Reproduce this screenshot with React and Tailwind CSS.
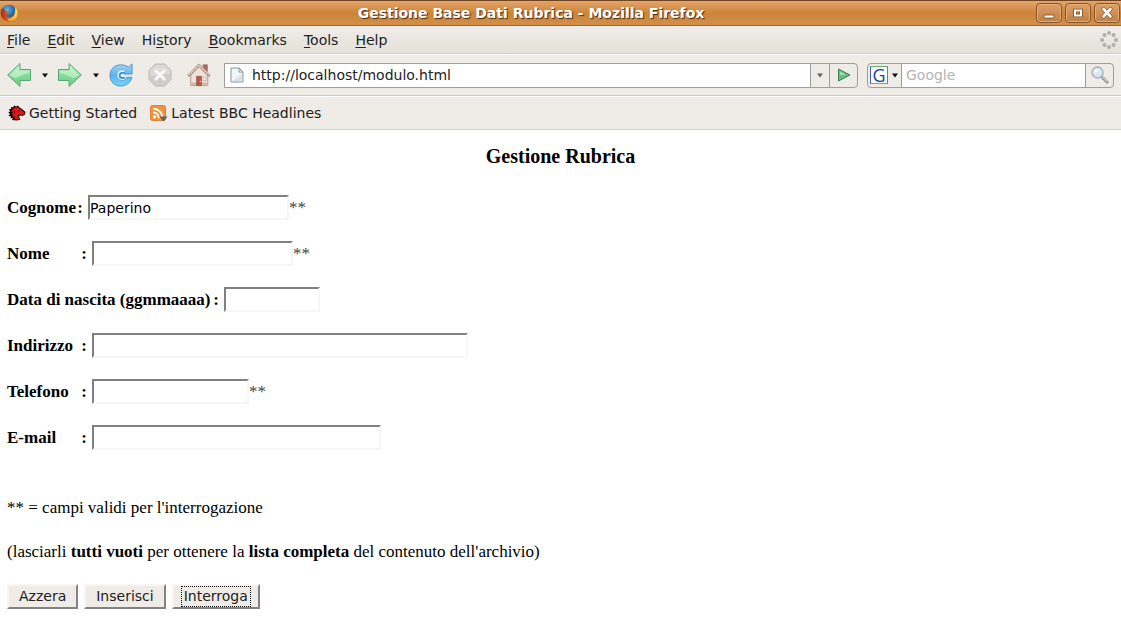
import React, { useState } from "react";

const menus = ["File", "Edit", "View", "History", "Bookmarks", "Tools", "Help"];
// index of the underlined letter in each menu name
const accessKeys = { History: 3 };

const fields = [
  { id: "cognome", label: "Cognome", width: "w-[201px]", starred: true, labelWidth: "w-19" },
  { id: "nome", label: "Nome", width: "w-[201px]", starred: true, labelWidth: "w-20" },
  { id: "nascita", label: "Data di nascita (ggmmaaaa)", width: "w-24", labelWidth: "w-53" },
  { id: "indirizzo", label: "Indirizzo", width: "w-[376px]", labelWidth: "w-20" },
  { id: "telefono", label: "Telefono", width: "w-[157px]", starred: true, labelWidth: "w-20" },
  { id: "email", label: "E-mail", width: "w-[289px]", labelWidth: "w-20" },
];

const FirefoxIcon = () => (
  <svg width="18" height="18" viewBox="0 0 18 18">
    <defs>
      <radialGradient id="globe" cx="0.4" cy="0.3" r="0.8">
        <stop offset="0" stopColor="#6ab4dd" />
        <stop offset="0.5" stopColor="#2566a8" />
        <stop offset="1" stopColor="#17306e" />
      </radialGradient>
      <linearGradient id="tail" x1="0" y1="0" x2="1" y2="0">
        <stop offset="0" stopColor="#a8281a" />
        <stop offset="0.5" stopColor="#ea6a1b" />
        <stop offset="1" stopColor="#ffd83e" />
      </linearGradient>
    </defs>
    <circle cx="9" cy="9" r="8.300" fill="url(#globe)" />
    <path d="M1 5C0 12 4 17.500 9.500 17.500C15 17.500 18 13 17.500 8C17.300 5.500 16 3.500 14.500 2.500C15.500 5 15.200 6 14.800 7.500C15 11 12.500 13.500 9.500 13.300C7.500 13.200 6.300 12 6 10.500C7.500 11 8.800 10.700 10 9.700C8.500 9.800 7.500 9 6.700 8.200C6.200 7.300 5.500 6.500 4.600 6.300C4 5.500 3.600 4.500 3.700 3.600C3 4 2.600 4.600 2.400 5.300Z" fill="url(#tail)" />
    <path d="M16 5C17 11 14 16 8 16" fill="none" stroke="#ffe25b" strokeWidth="1" />
  </svg>
);

const Arrow = ({ flip }) => (
  <svg width="24" height="26" viewBox="0 0 24 26" className={flip ? "-scale-x-100" : ""}>
    <defs>
      <linearGradient id="arrowFill" x1="0" y1="0" x2="0" y2="1">
        <stop offset="0" stopColor="#c2f0c8" />
        <stop offset="0.5" stopColor="#84dc98" />
        <stop offset="1" stopColor="#6ccb82" />
      </linearGradient>
    </defs>
    <path d="M0.700 13L13 1.500V7.500H23.500V18.500H13V24.500Z" fill="url(#arrowFill)" stroke="#58a877" strokeWidth="1" strokeLinejoin="round" />
    <path d="M2.500 13L12 4V8.500H22.500V11C17 11 13 15 8 16Z" fill="#d5f7d8" opacity="0.6" />
  </svg>
);

const Caret = ({ color = "#111" }) => (
  <svg width="8" height="5" viewBox="0 0 8 5">
    <path d="M1 0.500H7L4 4.500Z" fill={color} />
  </svg>
);

const ReloadIcon = () => (
  <svg width="24" height="24" viewBox="0 0 26 26">
    <defs>
      <linearGradient id="reloadFill" x1="0" y1="0" x2="0" y2="1">
        <stop offset="0" stopColor="#a8d8f4" />
        <stop offset="0.5" stopColor="#58b4ec" />
        <stop offset="1" stopColor="#7bd2f8" />
      </linearGradient>
    </defs>
    <path d="M21 4.500L25 1V12H14L17 8.500C15.500 7.300 13 7 11 8.500C8 10.800 8.300 15.700 11.500 17.700C14.500 19.500 18 18 19 15.500H25C23 21.500 18.500 25 12.500 25C6 25 1 20 1 13.500C1 7 6 2 12.500 2C16 2 19 3 21 4.500Z" fill="url(#reloadFill)" stroke="#4b93c8" strokeWidth="1" strokeLinejoin="round" />
    <path d="M17 8.500C15.500 7.300 13 7 11 8.500C8 10.800 8.300 15.700 11.500 17.700C14.500 19.500 18 18 19 15.500L16 13.500Z" fill="#e8f5fc" />
    <path d="M17.200 11.200C14.500 9.800 11.500 11 11.500 13.500C11.500 16 14.500 17 17.500 15.500" fill="none" stroke="#3f97d6" strokeWidth="2.200" />
  </svg>
);

const StopIcon = () => (
  <svg width="24" height="24" viewBox="0 0 26 26">
    <path d="M8 1H18L25 8V18L18 25H8L1 18V8Z" fill="#cfcdcb" stroke="#bfbdba" />
    <path d="M8.500 2.200H17.500L23.800 8.500V12C17 11 10 14 2.200 14V8.500Z" fill="#dcdad8" />
    <path d="M8.500 8.500L17.500 17.500M17.500 8.500L8.500 17.500" stroke="#f9f8f7" strokeWidth="3.200" strokeLinecap="round" />
  </svg>
);

const HomeIcon = () => (
  <svg width="24" height="24" viewBox="0 0 26 26">
    <path d="M17.500 2H22V9L17.500 6Z" fill="#b5675b" stroke="#a3736a" />
    <path d="M4 12L13 3.500L22.500 12V24.500H4Z" fill="#f0e2d7" stroke="#b39b8c" />
    <path d="M4.500 21H22V24H4.500Z" fill="#cfb9a9" />
    <path d="M1.500 14L13 2.500L24.500 14" fill="none" stroke="#a38b80" strokeWidth="3" strokeLinejoin="round" />
    <path d="M2 13L13 2.500L24 13" fill="none" stroke="#dccdc3" strokeWidth="1.500" />
    <rect x="10.500" y="14.500" width="5" height="10" fill="#b7584a" stroke="#9a6156" />
    <rect x="17.500" y="15" width="3" height="4" fill="#fff" stroke="#b9a497" strokeWidth="0.800" />
    <circle cx="14.500" cy="20" r="0.700" fill="#fff" />
  </svg>
);

const PageIcon = () => (
  <svg width="14" height="16" viewBox="0 0 14 16">
    <path d="M1 1H9L13 5V15H1Z" fill="#f3f6f8" stroke="#8295a1" />
    <path d="M9 1V5H13Z" fill="#fff" stroke="#8295a1" strokeLinejoin="round" />
    <path d="M2.500 14L12 7V14Z" fill="#dbe4ea" />
  </svg>
);

const GoIcon = () => (
  <svg width="14" height="14" viewBox="0 0 14 14">
    <path d="M1.500 1L13 7L1.500 13Z" fill="#67bd82" stroke="#35874f" strokeLinejoin="round" />
    <path d="M3 3.500L9 7H3Z" fill="#a7dfb5" />
  </svg>
);

const SearchIcon = () => (
  <svg width="18" height="18" viewBox="0 0 18 18">
    <path d="M10.500 10.500L16 16" stroke="#8b8b8b" strokeWidth="3" strokeLinecap="round" />
    <path d="M11 10.500L16 15.500" stroke="#cfcfcf" strokeWidth="1.200" strokeLinecap="round" />
    <circle cx="6.500" cy="6.500" r="5.500" fill="#d3e7f4" stroke="#a9afb3" strokeWidth="1.300" />
    <path d="M3 6.500C3 4 5 3 7.500 3.200C8.500 5 5.500 7 3 6.500Z" fill="#fff" />
  </svg>
);

const GoogleMark = () => (
  <span className="flex h-[18px] w-[18px] items-center justify-center border border-t-[#62b06a] border-r-[#d9515a] border-b-[#62b06a] border-l-[#3d62c4] bg-white font-['Open_Sans','DejaVu_Sans',sans-serif] text-[18px] leading-none text-[#20409c]">
    G
  </span>
);

const Throbber = () => (
  <svg width="18" height="18" viewBox="0 0 18 18" fill="#b1afab">
    <circle cx="9" cy="2" r="2" />
    <circle cx="13.500" cy="4" r="2" />
    <circle cx="16" cy="9" r="2" />
    <circle cx="13.500" cy="14" r="2" />
    <circle cx="9" cy="16" r="2" />
    <circle cx="4.500" cy="14" r="2" />
    <circle cx="2" cy="9" r="2" />
    <circle cx="4.500" cy="4" r="2" />
  </svg>
);

const DragonIcon = () => (
  <svg width="18" height="16" viewBox="0 0 18 16">
    <path d="M1 4L3 4L3 2L5 2.500L6 0.500L8 1.500L10 0.500L11 2L14 4L17.500 7L17 9.500L14.500 11L12 10.500L11 12L12.500 14.500L9 15.500L4 15L5 13L2.500 13.500L3 11.500L0.500 11L2 9L0.300 7.500L2 6.500Z" fill="#1c0505" />
    <path d="M5 4L8 2L11 3L16.500 7.500L16 9L13.500 10L10.500 9.500L9.500 11L11 14L6.500 14.500L7 11.500L4.500 12.500L5.500 9.500L3.500 9.500L5 7L3 6.500Z" fill="#e01515" />
    <path d="M10 5.500L11.500 6.200" stroke="#300" strokeWidth="1" />
    <path d="M6 6L7 8.500" stroke="#4d0606" strokeWidth="0.800" fill="none" />
  </svg>
);

const FeedIcon = () => (
  <svg width="18" height="17" viewBox="0 0 18 17">
    <rect x="0.500" y="0.500" width="15" height="15" rx="2" fill="#ef9340" stroke="#dd8438" />
    <circle cx="4.500" cy="11.800" r="1.600" fill="#fff" />
    <path d="M3 7.300A5.700 5.700 0 0 1 8.800 13.200M3 3.600A9.400 9.400 0 0 1 12.500 13.200" fill="none" stroke="#fff" strokeWidth="1.800" />
    <path d="M9.500 11.500H17.500L13.500 16.500Z" fill="#625f5c" />
  </svg>
);

function WindowButton({ label, children }) {
  return (
    <button
      aria-label={label}
      className="flex h-5 w-[26px] items-center justify-center rounded-sm border border-[#85542a] bg-linear-to-b from-[#dda06a] to-[#c08040] shadow-[inset_0_0_0_1px_#e3ae7c]"
    >
      <svg width="12" height="12" viewBox="0 0 12 12">{children}</svg>
    </button>
  );
}

function TitleBar() {
  return (
    <header className="flex h-[26px] items-center border-t border-b border-t-[#6f4524] border-b-[#9a6635] bg-linear-to-b from-[#e5a568] via-[#cb8439] to-[#d39048] pr-px">
      <FirefoxIcon />
      <h1 className="flex-1 pl-2 text-center text-[14px] leading-5 font-bold text-white [text-shadow:1px_1px_1px_#4a2a10]">
        Gestione Base Dati Rubrica - Mozilla Firefox
      </h1>
      <div className="flex gap-[3px]">
        <WindowButton label="Minimize">
          <path d="M1 8H11V11H1Z" fill="#fff" stroke="#7b4a20" strokeWidth="0.800" />
        </WindowButton>
        <WindowButton label="Maximize">
          <path d="M3 3.500H9V8.500H3Z" fill="none" stroke="#7b4a20" strokeWidth="3.500" />
          <path d="M3 3.500H9V8.500H3Z" fill="none" stroke="#fff" strokeWidth="2" />
        </WindowButton>
        <WindowButton label="Close">
          <path d="M2.500 2L9.500 9.500M9.500 2L2.500 9.500" stroke="#7b4a20" strokeWidth="3.800" strokeLinecap="round" />
          <path d="M2.500 2L9.500 9.500M9.500 2L2.500 9.500" stroke="#fff" strokeWidth="2.600" strokeLinecap="round" />
        </WindowButton>
      </div>
    </header>
  );
}

function MenuBar() {
  return (
    <nav className="flex h-7 items-center justify-between border-b border-[#d3cdc5] bg-linear-to-b from-[#f0ede9] to-[#e6e0da] pr-[3px] pl-[7px]">
      <div className="flex gap-[17px]">
        {menus.map((name) => {
          const k = accessKeys[name] ? accessKeys[name] - 1 : 0;
          return (
            <button key={name} className="leading-5">
              {name.slice(0, k)}
              <span className="underline underline-offset-2">{name[k]}</span>
              {name.slice(k + 1)}
            </button>
          );
        })}
      </div>
      <Throbber />
    </nav>
  );
}

function NavBar() {
  const [url, setUrl] = useState("http://localhost/modulo.html");
  return (
    <div className="flex h-[42px] items-center border-t border-b border-t-white border-b-[#cfc9c1] px-[7px]">
      <button aria-label="Back"><Arrow /></button>
      <button aria-label="Back history" className="flex w-[27px] justify-center"><Caret /></button>
      <button aria-label="Forward"><Arrow flip /></button>
      <button aria-label="Forward history" className="flex w-[27px] justify-center"><Caret /></button>
      <div className="flex gap-[15px]">
        <button aria-label="Reload"><ReloadIcon /></button>
        <button aria-label="Stop"><StopIcon /></button>
        <button aria-label="Home"><HomeIcon /></button>
      </div>
      <div className="ml-[13px] flex h-[25px] flex-1 overflow-hidden rounded-r border border-[#a09e9b]">
        <div className="flex flex-1 items-center gap-2 bg-white pl-[5px]">
          <PageIcon />
          <input
            aria-label="Location"
            value={url}
            onChange={(e) => setUrl(e.target.value)}
            className="min-w-0 flex-1 bg-white outline-none"
          />
        </div>
        <button aria-label="Show history" className="flex w-[19px] items-center justify-center border-l border-[#a09e9b]">
          <Caret color="#66635f" />
        </button>
        <button aria-label="Go" className="flex w-7 items-center justify-center border-l border-[#a09e9b]">
          <GoIcon />
        </button>
      </div>
      <div className="ml-[9px] flex h-[25px] w-[247px] overflow-hidden rounded border border-[#a09e9b]">
        <button aria-label="Search engine" className="flex w-[34px] items-center justify-center gap-[3px] border-r border-[#a09e9b]">
          <GoogleMark />
          <Caret />
        </button>
        <input
          aria-label="Search"
          placeholder="Google"
          className="min-w-0 flex-1 bg-white pl-1 outline-none placeholder:text-[#b5b3b0]"
        />
        <button aria-label="Search" className="flex w-7 items-center justify-center border-l border-[#a09e9b]">
          <SearchIcon />
        </button>
      </div>
    </div>
  );
}

function BookmarksBar() {
  return (
    <div className="flex h-[34px] items-center gap-[13px] border-t border-b border-t-white border-b-[#d8d0c8] pl-2">
      <a href="#getting-started" className="flex items-center gap-[3px]">
        <DragonIcon />
        Getting Started
      </a>
      <a href="#headlines" className="flex items-center gap-[3px]">
        <FeedIcon />
        Latest BBC Headlines
      </a>
    </div>
  );
}

function Field({ field, value, onChange }) {
  return (
    <div className="flex h-[25px] items-center">
      <label htmlFor={field.id} className={`mr-[5px] flex justify-between font-bold ${field.labelWidth}`}>
        <span>{field.label}</span>
        <span>:</span>
      </label>
      <input
        id={field.id}
        value={value}
        onChange={onChange}
        className={`h-[25px] border-2 border-t-[#808080] border-r-[#f7f6f4] border-b-[#f7f6f4] border-l-[#808080] bg-white font-['DejaVu_Sans',sans-serif] text-[14px] outline-none ${field.width}`}
      />
      {field.starred && <span className="text-[#444]">**</span>}
    </div>
  );
}

function FormButton({ children, selected, ...props }) {
  return (
    <button
      className="h-[25px] border-2 border-t-[#f7f6f4] border-r-[#85827f] border-b-[#85827f] border-l-[#f7f6f4] bg-[#efebe7] px-[7px] font-['DejaVu_Sans',sans-serif] text-[14px] leading-5 text-[#222]"
      {...props}
    >
      <span className={`block border border-dotted px-[2px] leading-[19px] ${selected ? "border-black" : "border-transparent"}`}>
        {children}
      </span>
    </button>
  );
}

export default function App() {
  const [values, setValues] = useState({ cognome: "Paperino" });

  return (
    <div className="min-h-screen bg-white">
      <div className="bg-[#efebe7] font-['DejaVu_Sans',sans-serif] text-[14px] leading-5 text-[#222]">
        <TitleBar />
        <MenuBar />
        <NavBar />
        <BookmarksBar />
      </div>
      <main className="px-[7px] pt-[14px] font-['Liberation_Serif',serif] text-[17px] leading-5 text-black">
        <h2 className="text-center text-[20px] leading-6 font-bold">Gestione Rubrica</h2>
        <form onSubmit={(e) => e.preventDefault()}>
          <div className="mt-[27px] flex flex-col gap-[21px]">
            {fields.map((f) => (
              <Field
                key={f.id}
                field={f}
                value={values[f.id] || ""}
                onChange={(e) => setValues({ ...values, [f.id]: e.target.value })}
              />
            ))}
          </div>
          <p className="mt-12">** = campi validi per l'interrogazione</p>
          <p className="mt-6">
            (lasciarli <b>tutti vuoti</b> per ottenere la <b>lista completa</b> del contenuto dell'archivio)
          </p>
          <div className="mt-[22px] flex gap-[6px]">
            <FormButton type="button" onClick={() => setValues({})}>Azzera</FormButton>
            <FormButton type="submit">Inserisci</FormButton>
            <FormButton type="submit" selected>Interroga</FormButton>
          </div>
        </form>
      </main>
    </div>
  );
}
